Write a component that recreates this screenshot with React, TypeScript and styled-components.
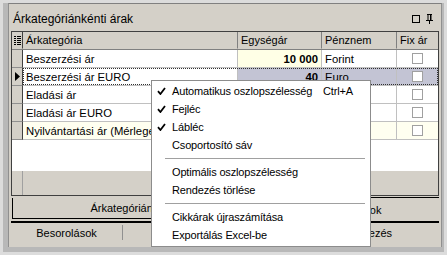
import React from "react";
import styled, { createGlobalStyle, css } from "styled-components";

const GlobalStyle = createGlobalStyle`
  html, body { margin: 0; padding: 0; background: #d4d0c8; }
  body { font-family: "Liberation Sans", Arial, sans-serif; font-size: 11px; color: #000; }
  * { box-sizing: border-box; }
`;

const Frame = styled.div`
  position: relative;
  width: 447px;
  height: 255px;
  background: #dcdcdc;
  padding: 3px;
`;

const FrameBand = styled.div`
  width: 100%;
  height: 100%;
  background: #b8b8b8;
  padding: 0 2px 5px 5px;
`;

const Panel = styled.div`
  width: 100%;
  height: 100%;
  background: #d4d0c8;
  display: flex;
  flex-direction: column;
  border-top: 1px solid #808080;
  border-left: 1px solid #909090;
  border-right: 1px solid #909090;
`;

const TitleBar = styled.div`
  height: 27px;
  display: flex;
  align-items: center;
  padding: 2px 8px 0 4px;
  font-size: 12px;
`;

const TitleText = styled.span`
  flex: auto;
`;

const TitleIcons = styled.div`
  display: flex;
  gap: 6px;
  align-items: center;
`;

const Body = styled.div`
  flex: auto;
  display: flex;
  flex-direction: column;
  padding: 0 2px;
`;

const Grid = styled.div`
  display: flex;
  flex-direction: column;
  height: 165px;
  border: 1px solid #404040;
  background: #fff;
`;

const Row = styled.div<{ header?: boolean }>`
  display: grid;
  grid-template-columns: 11px 215px 84px 75px 1fr;
  height: 18px;
  ${(p) =>
    p.header &&
    css`
      background: #d4d0c8;
      border-bottom: 1px solid #808080;
    `}
`;

const Cell = styled.div<{
  bg?: string;
  right?: boolean;
  bold?: boolean;
  center?: boolean;
  header?: boolean;
}>`
  display: flex;
  align-items: center;
  padding: 0 3px;
  overflow: hidden;
  white-space: nowrap;
  font-size: ${(p) => (p.header ? "11px" : "11.3px")};
  border-right: 1px solid ${(p) => (p.header ? "#808080" : "#c0c0c0")};
  border-bottom: 1px solid ${(p) => (p.header ? "transparent" : "#c0c0c0")};
  background: ${(p) => p.bg || "transparent"};
  justify-content: ${(p) => (p.right ? "flex-end" : p.center ? "center" : "flex-start")};
  font-weight: ${(p) => (p.bold ? "bold" : "normal")};
  &:last-child { border-right: none; }
`;

const Indicator = styled.div<{ header?: boolean }>`
  background: #d4d0c8;
  border-right: 1px solid #404040;
  border-bottom: 1px solid ${(p) => (p.header ? "transparent" : "#909090")};
  display: flex;
  align-items: center;
  justify-content: center;
`;

const SelectedRow = styled.div`
  position: relative;
  &::after {
    content: "";
    position: absolute;
    left: 11px;
    right: 0;
    top: 0;
    bottom: 1px;
    border: 1px dotted #303030;
    pointer-events: none;
  }
`;

const Check = styled.div`
  width: 11px;
  height: 11px;
  border: 1px solid #a0a0a0;
  background: #fff;
`;

const Filler = styled.div`
  flex: auto;
`;

const Footer = styled.div`
  height: 25px;
  background: #d4d0c8;
  border-top: 1px solid #fff;
  display: grid;
  grid-template-columns: 11px 1fr;
`;

const FooterIndicator = styled.div`
  border-right: 1px solid #a0a0a0;
`;

const Tabs = styled.div`
  flex: auto;
  display: flex;
  flex-direction: column;
`;

const TabRow = styled.div<{ divided?: boolean }>`
  display: flex;
  height: 25px;
  ${(p) =>
    p.divided &&
    css`
      height: 19px;
      border-top: 2px solid #000;
      padding-top: 2px;
    `}
`;

const ActiveTab = styled.div`
  flex: 0 0 266px;
  margin: 2px 0 2px 1px;
  border-left: 1px solid #000;
  border-bottom: 1px solid #000;
  display: flex;
  align-items: center;
  justify-content: center;
`;

const Tab = styled.div`
  flex: auto;
  margin-top: 1px;
  border-top: 1px solid #000;
  display: flex;
  align-items: center;
  justify-content: center;
  padding-right: 14px;
`;

const FlatTab = styled.div<{ w?: number; sep?: boolean }>`
  flex: ${(p) => (p.w ? `0 0 ${p.w}px` : "auto")};
  display: flex;
  align-items: center;
  justify-content: center;
  ${(p) => p.sep && css`border-right: 1px solid #909090;`}
`;

const Menu = styled.div`
  position: absolute;
  left: 151px;
  top: 80px;
  width: 220px;
  background: #fff;
  border: 1px solid #8c8c8c;
  padding: 1px 0 2px;
  letter-spacing: -0.15px;
`;

const MenuItem = styled.div`
  display: grid;
  grid-template-columns: 15px 151px auto;
  align-items: center;
  height: 18px;
  padding-left: 5px;
  white-space: nowrap;
`;

const CheckSlot = styled.span`
  display: flex;
  align-items: center;
`;

const Separator = styled.div`
  height: 1px;
  background: #a0a0a0;
  margin: 4px 5px 4px 13px;
`;

const CheckMark = () => (
  <svg width="9" height="8" viewBox="0 0 9 8">
    <path d="M1 4.2 L3.4 7 L8 1" stroke="#000" strokeWidth="1.8" fill="none" />
  </svg>
);

type GridRow = {
  name: string;
  price?: string;
  currency?: string;
  bg?: string;
  priceBg?: string;
};

const rows: GridRow[] = [
  { name: "Beszerzési ár", price: "10 000", currency: "Forint", priceBg: "#ffffe6" },
  { name: "Beszerzési ár EURO", price: "40", currency: "Euro" },
  { name: "Eladási ár" },
  { name: "Eladási ár EURO" },
  { name: "Nyilvántartási ár (Mérlegelési ár)", bg: "#fffff0" },
];

const menu: (string | { label: string; checked?: boolean; shortcut?: string })[] = [
  { label: "Automatikus oszlopszélesség", checked: true, shortcut: "Ctrl+A" },
  { label: "Fejléc", checked: true },
  { label: "Lábléc", checked: true },
  { label: "Csoportosító sáv" },
  "-",
  { label: "Optimális oszlopszélesség" },
  { label: "Rendezés törlése" },
  "-",
  { label: "Cikkárak újraszámítása" },
  { label: "Exportálás Excel-be" },
];

export default function App() {
  return (
    <>
      <GlobalStyle />
      <Frame>
        <FrameBand>
          <Panel>
            <TitleBar>
              <TitleText>Árkategóriánkénti árak</TitleText>
              <TitleIcons>
                <svg width="8" height="8" viewBox="0 0 8 8">
                  <rect x="0.5" y="0.5" width="7" height="7" fill="none" stroke="#000" />
                </svg>
                <svg width="7" height="10" viewBox="0 0 7 10">
                  <path d="M1 0.5 H6 M2 0.5 V6 M5 0.5 V6 M0 6.5 H7 M3.5 6.5 V10" stroke="#000" fill="none" />
                  <rect x="4" y="1" width="1" height="5" fill="#000" />
                </svg>
              </TitleIcons>
            </TitleBar>
            <Body>
              <Grid>
                <Row header>
                  <Indicator header>
                    <svg width="7" height="10" viewBox="0 0 7 10">
                      <path d="M0 1.5 H2 M3 1.5 H7 M0 3.5 H2 M3 3.5 H7 M0 5.5 H2 M3 5.5 H7 M0 7.5 H2 M3 7.5 H7 M0 9.5 H2 M3 9.5 H7" stroke="#000" />
                    </svg>
                  </Indicator>
                  <Cell header>Árkategória</Cell>
                  <Cell header>Egységár</Cell>
                  <Cell header>Pénznem</Cell>
                  <Cell header>Fix ár</Cell>
                </Row>
                {rows.map((r, i) => {
                  const selected = i === 1;
                  const sel = selected ? "#c3c4d4" : r.bg;
                  const content = (
                    <Row key={r.name}>
                      <Indicator>
                        {selected && (
                          <svg width="5" height="9" viewBox="0 0 5 9">
                            <path d="M0 0 L5 4.5 L0 9 Z" fill="#000" />
                          </svg>
                        )}
                      </Indicator>
                      <Cell bg={r.bg}>{r.name}</Cell>
                      <Cell right bold bg={sel || r.priceBg}>{r.price}</Cell>
                      <Cell bg={sel}>{r.currency}</Cell>
                      <Cell center bg={sel}>
                        <Check />
                      </Cell>
                    </Row>
                  );
                  return selected ? <SelectedRow key={r.name}>{content}</SelectedRow> : content;
                })}
                <Filler />
                <Footer>
                  <FooterIndicator />
                  <div />
                </Footer>
              </Grid>
              <Tabs>
                <TabRow>
                  <ActiveTab>Árkategóriánkénti árak</ActiveTab>
                  <Tab>Kapcsolatok</Tab>
                </TabRow>
                <TabRow divided>
                  <FlatTab w={112} sep>Besorolások</FlatTab>
                  <FlatTab w={153} sep>Mértékegységek</FlatTab>
                  <FlatTab>Engedélyezés</FlatTab>
                </TabRow>
              </Tabs>
            </Body>
          </Panel>
        </FrameBand>
        <Menu>
          {menu.map((m, i) =>
            typeof m === "string" ? (
              <Separator key={i} />
            ) : (
              <MenuItem key={i}>
                <CheckSlot>{m.checked && <CheckMark />}</CheckSlot>
                <span>{m.label}</span>
                {m.shortcut && <span>{m.shortcut}</span>}
              </MenuItem>
            )
          )}
        </Menu>
      </Frame>
    </>
  );
}
